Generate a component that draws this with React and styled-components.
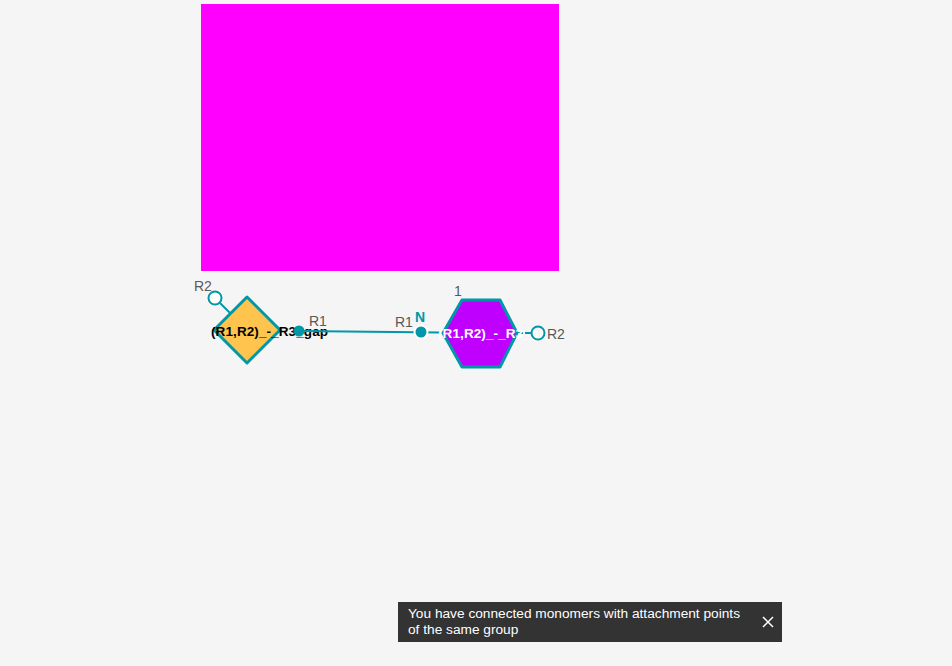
import styled, { createGlobalStyle } from 'styled-components';

const GlobalStyle = createGlobalStyle`
  html, body {
    margin: 0;
    padding: 0;
    background: #f5f5f5;
    font-family: "Liberation Sans", Arial, sans-serif;
  }
`;

const TEAL = '#0097a8';

export default function App() {
  return (
    <>
      <GlobalStyle />
      <Editor>
        <Preview />
        <Chain width="952" height="120" viewBox="0 271 952 120">
          {/* diamond monomer */}
          <Label x="194" y="291">R2</Label>
          <line x1="220" y1="303" x2="230" y2="313" stroke={TEAL} strokeWidth="2" />
          <circle cx="215" cy="298" r="6.5" fill="#fff" stroke={TEAL} strokeWidth="2" />
          <polygon
            points="247,297 280,330 247,363 214,330"
            fill="#ffc44d"
            stroke={TEAL}
            strokeWidth="3"
            strokeLinejoin="round"
          />
          <MonomerName x="211" y="336" fill="#000">(R1,R2)_-_R3_gap</MonomerName>

          {/* bond */}
          <line x1="299" y1="331" x2="440" y2="332.5" stroke={TEAL} strokeWidth="2" />
          <circle cx="299" cy="331" r="5.5" fill={TEAL} />
          <Label x="309" y="326">R1</Label>
          <Label x="395" y="327">R1</Label>
          <Atom x="415" y="322">N</Atom>
          <circle cx="421" cy="332" r="6.5" fill={TEAL} stroke="#fff" strokeWidth="2" />

          {/* hexagon monomer */}
          <Label x="454" y="296">1</Label>
          <line x1="517" y1="333" x2="532" y2="333" stroke={TEAL} strokeWidth="2" strokeDasharray="6 2" />
          <polygon
            points="462,300 500,300 517,333 500,367 462,367 443,333"
            fill="#c000ff"
            stroke={TEAL}
            strokeWidth="3"
            strokeLinejoin="round"
          />
          <MonomerName x="438" y="338" fill="#fff">(R1,R2)_-_R3_gap</MonomerName>
          <circle cx="538" cy="333" r="6.5" fill="none" stroke={TEAL} strokeWidth="2" />
          <Label x="547" y="339">R2</Label>
        </Chain>
      </Editor>
      <Toast>
        <ToastText>
          You have connected monomers with attachment points of the same group
        </ToastText>
        <CloseButton aria-label="close">
          <svg width="12" height="12" viewBox="0 0 12 12">
            <path d="M1 1 L11 11 M11 1 L1 11" stroke="#fff" strokeWidth="1.5" />
          </svg>
        </CloseButton>
      </Toast>
    </>
  );
}

const Editor = styled.main`
  display: flex;
  flex-direction: column;
  width: 952px;
  height: 666px;
  overflow: hidden;
`;

const Preview = styled.div`
  width: 358px;
  height: 267px;
  margin: 4px 0 0 201px;
  background: #ff00ff;
`;

const Chain = styled.svg`
  display: block;
  overflow: visible;
`;

const Label = styled.text`
  font-family: "Liberation Sans", Arial, sans-serif;
  font-size: 14px;
  fill: #585858;
`;

const Atom = styled.text`
  font-family: "Liberation Sans", Arial, sans-serif;
  font-size: 14px;
  font-weight: bold;
  fill: ${TEAL};
`;

const MonomerName = styled.text`
  font-family: "Liberation Sans", Arial, sans-serif;
  font-size: 13.5px;
  font-weight: bold;
  letter-spacing: 0.1px;
`;

const Toast = styled.div`
  position: fixed;
  left: 398px;
  bottom: 24px;
  width: 384px;
  height: 40px;
  box-sizing: border-box;
  padding: 0 10px;
  display: flex;
  align-items: center;
  justify-content: space-between;
  background: #333;
  color: #fff;
`;

const ToastText = styled.p`
  margin: 0;
  width: 340px;
  flex-shrink: 0;
  font-family: "Liberation Sans", Arial, sans-serif;
  font-size: 13.7px;
  line-height: 16px;
`;

const CloseButton = styled.button`
  display: flex;
  align-items: center;
  justify-content: center;
  padding: 0;
  margin-right: -2px;
  border: none;
  background: none;
  cursor: pointer;
`;
